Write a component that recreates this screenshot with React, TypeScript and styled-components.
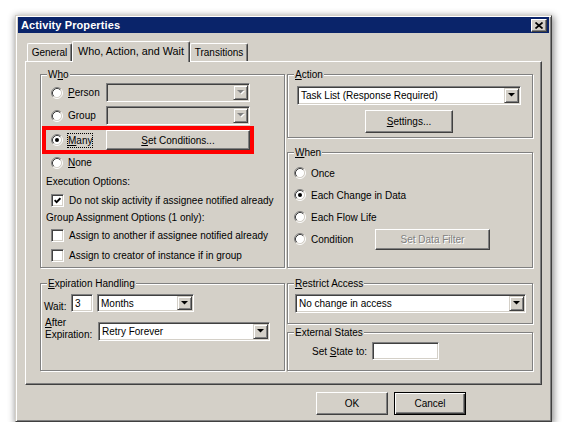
import React from 'react';
import styled, { createGlobalStyle, css } from 'styled-components';

const FACE = '#d4d0c8';
const SHADOW = '#808080';
const DARK = '#404040';
const LIGHT = '#ffffff';
const UI_FONT = '"Liberation Sans", Arial, sans-serif';

const GlobalStyle = createGlobalStyle`
  html, body {
    margin: 0;
    background: #ffffff;
  }
  body {
    font-family: ${UI_FONT};
    font-size: 10px;
    color: #000;
  }
`;

const raised = css`
  border: 1px solid;
  border-color: ${LIGHT} ${DARK} ${DARK} ${LIGHT};
  box-shadow: inset -1px -1px ${SHADOW};
`;

const sunken = css`
  border: 1px solid;
  border-color: ${SHADOW} ${LIGHT} ${LIGHT} ${SHADOW};
  box-shadow: inset 1px 1px ${DARK}, inset -1px -1px ${FACE};
`;

const Desktop = styled.div`
  padding: 15px 0 0 15px;
`;

const Window = styled.div`
  box-sizing: border-box;
  width: 537px;
  height: 407px;
  padding: 1px 2px 2px 2px;
  display: flex;
  flex-direction: column;
  background: ${FACE};
  border: 1px solid;
  border-color: ${FACE} ${DARK} ${DARK} ${FACE};
  box-shadow: inset 1px 1px ${LIGHT}, inset -1px -1px ${SHADOW}, 1px 2px 7px 1px rgba(0, 0, 0, 0.45);
`;

const TitleBar = styled.div`
  height: 16px;
  display: flex;
  align-items: center;
  justify-content: space-between;
  padding: 0 2px 0 3px;
  background: #0a246a;
`;

const TitleText = styled.span`
  color: #fff;
  font-weight: bold;
  font-size: 11px;
  letter-spacing: 0.1px;
`;

const CloseButton = styled.button`
  box-sizing: border-box;
  width: 16px;
  height: 13px;
  padding: 0;
  display: flex;
  align-items: center;
  justify-content: center;
  background: ${FACE};
  ${raised};
`;

const TabStrip = styled.div`
  display: flex;
  align-items: flex-end;
  height: 20px;
  margin: 8px 0 0 9px;
`;

const Tab = styled.div<{ $w: number; $active?: boolean }>`
  box-sizing: border-box;
  width: ${(p) => p.$w}px;
  height: ${(p) => (p.$active ? 21 : 18)}px;
  margin-bottom: ${(p) => (p.$active ? -1 : 0)}px;
  padding-top: 3px;
  position: ${(p) => (p.$active ? 'relative' : 'static')};
  z-index: ${(p) => (p.$active ? 1 : 0)};
  text-align: center;
  white-space: nowrap;
  font-size: ${(p) => (p.$active ? 10.8 : 10)}px;
  background: ${FACE};
  border-top: 1px solid ${LIGHT};
  border-left: 1px solid ${LIGHT};
  border-right: 1px solid ${DARK};
  border-radius: 2px 2px 0 0;
  box-shadow: inset -1px 0 ${SHADOW};
`;

const Panel = styled.div`
  box-sizing: border-box;
  width: 517px;
  height: 324px;
  margin-left: 7px;
  padding: 12px 8px 0 14px;
  display: grid;
  grid-template-columns: 245px 246px;
  column-gap: 2px;
  align-content: start;
  border: 1px solid;
  border-color: ${LIGHT} ${DARK} ${DARK} ${LIGHT};
  box-shadow: inset -1px -1px ${SHADOW};
`;

const Column = styled.div`
  display: flex;
  flex-direction: column;
`;

const GroupBox = styled.div<{ $h: number; $mt?: number }>`
  position: relative;
  box-sizing: border-box;
  height: ${(p) => p.$h}px;
  margin-top: ${(p) => p.$mt ?? 0}px;
  border: 1px solid ${SHADOW};
  box-shadow: inset 1px 1px ${LIGHT}, 1px 1px ${LIGHT};
`;

const Legend = styled.span`
  position: absolute;
  top: -7px;
  left: 6px;
  padding: 0 1px;
  line-height: 13px;
  background: ${FACE};
`;

const GroupBody = styled.div<{ $pt: number; $pl: number }>`
  display: flex;
  flex-direction: column;
  padding: ${(p) => p.$pt}px 0 0 ${(p) => p.$pl}px;
`;

const ChoiceRow = styled.div<{ $h: number; $mt?: number; $col?: number; $pl?: number }>`
  display: grid;
  grid-template-columns: ${(p) => p.$col ?? 55}px auto;
  align-items: center;
  height: ${(p) => p.$h}px;
  margin-top: ${(p) => p.$mt ?? 0}px;
  padding-left: ${(p) => p.$pl ?? 9}px;
`;

// red frame drawn round the "Many" choice
const Highlight = styled.div`
  box-sizing: border-box;
  width: 212px;
  height: 28px;
  margin-top: 1px;
  padding-left: 5px;
  display: grid;
  grid-template-columns: 55px 144px;
  align-items: center;
  border: 4px solid #ff0000;
`;

const OptionRow = styled.div<{ $h: number; $mt?: number; $pl?: number }>`
  display: flex;
  align-items: center;
  height: ${(p) => p.$h}px;
  margin-top: ${(p) => p.$mt ?? 0}px;
  padding-left: ${(p) => p.$pl ?? 9}px;
  white-space: nowrap;
`;

const Choice = styled.label`
  display: flex;
  align-items: center;
  white-space: nowrap;
`;

const ChoiceText = styled.span<{ $focused?: boolean }>`
  margin-left: ${(p) => (p.$focused ? 4 : 5)}px;
  ${(p) =>
    p.$focused &&
    css`
      border: 1px dotted #000;
      padding: 1px 0;
      line-height: 11px;
    `}
`;

const CheckBox = styled.span`
  box-sizing: border-box;
  width: 13px;
  height: 13px;
  display: flex;
  align-items: center;
  justify-content: center;
  background: #fff;
  ${sunken};
`;

const ComboBox = styled.div<{ $w: number; $h?: number; $disabled?: boolean }>`
  box-sizing: border-box;
  width: ${(p) => p.$w}px;
  height: ${(p) => p.$h ?? 19}px;
  padding: 1px;
  display: flex;
  align-items: stretch;
  background: ${(p) => (p.$disabled ? FACE : '#fff')};
  ${sunken};
`;

const ComboText = styled.span`
  flex: 1;
  display: flex;
  align-items: center;
  padding-left: 2px;
  white-space: nowrap;
  overflow: hidden;
`;

const DropButton = styled.span`
  box-sizing: border-box;
  width: 15px;
  display: flex;
  align-items: center;
  justify-content: center;
  background: ${FACE};
  border: 1px solid;
  border-color: ${FACE} ${DARK} ${DARK} ${FACE};
  box-shadow: inset 1px 1px ${LIGHT}, inset -1px -1px ${SHADOW};
`;

const TextBox = styled.div<{ $w: number; $h?: number }>`
  box-sizing: border-box;
  width: ${(p) => p.$w}px;
  height: ${(p) => p.$h ?? 18}px;
  padding: 1px 3px;
  display: flex;
  align-items: center;
  background: #fff;
  ${sunken};
`;

const PushButton = styled.button<{ $w: number; $h: number; $default?: boolean }>`
  box-sizing: border-box;
  width: ${(p) => p.$w}px;
  height: ${(p) => p.$h}px;
  padding: 0;
  font-family: ${UI_FONT};
  font-size: 10px;
  color: ${(p) => (p.disabled ? SHADOW : '#000')};
  text-shadow: ${(p) => (p.disabled ? `1px 1px ${LIGHT}` : 'none')};
  background: ${FACE};
  ${(p) =>
    p.$default
      ? css`
          border: 1px solid #000;
          box-shadow: inset 1px 1px ${LIGHT}, inset -1px -1px ${DARK}, inset -2px -2px ${SHADOW};
        `
      : raised};
`;

const CenterBox = styled.div`
  width: 224px;
  display: flex;
  justify-content: center;
  margin-top: 5px;
`;

const Caption = styled.span<{ $w: number }>`
  width: ${(p) => p.$w}px;
  flex-shrink: 0;
  white-space: nowrap;
`;

const StackCaption = styled.span`
  width: 53px;
  flex-shrink: 0;
  line-height: 12px;
  padding-left: 1px;
`;

const ExpireRow = styled.div<{ $mt?: number }>`
  display: flex;
  align-items: flex-end;
  margin-top: ${(p) => p.$mt ?? 0}px;
`;

const Spacer = styled.span<{ $w: number }>`
  width: ${(p) => p.$w}px;
  flex-shrink: 0;
`;

const ButtonBar = styled.div`
  display: flex;
  gap: 6px;
  margin-top: 7px;
  padding-left: 298px;
`;

const RadioMark = ({ checked }: { checked?: boolean }) => (
  <svg width="12" height="12" viewBox="0 0 12 12">
    <circle cx="6" cy="6" r="4.5" fill="#fff" />
    <path d="M2.11 9.89A5.5 5.5 0 0 1 9.89 2.11" fill="none" stroke={SHADOW} />
    <path d="M9.89 2.11A5.5 5.5 0 0 1 2.11 9.89" fill="none" stroke={LIGHT} />
    <path d="M2.82 9.18A4.5 4.5 0 0 1 9.18 2.82" fill="none" stroke={DARK} />
    <path d="M9.18 2.82A4.5 4.5 0 0 1 2.82 9.18" fill="none" stroke={FACE} />
    {checked && <circle cx="6" cy="6" r="2" fill="#000" />}
  </svg>
);

const CheckMark = () => (
  <svg width="7" height="7" viewBox="0 0 7 7">
    <path d="M0.6 3.2L2.6 5.2L6.4 1.2" fill="none" stroke="#000" strokeWidth="1.8" />
  </svg>
);

const Arrow = ({ disabled }: { disabled?: boolean }) => (
  <svg width="8" height="5" viewBox="0 0 8 5">
    {disabled && <path d="M1 1H8L4.5 4.5Z" fill={LIGHT} />}
    <path d="M0 0H7L3.5 3.5Z" fill={disabled ? SHADOW : '#000'} />
  </svg>
);

const CloseGlyph = () => (
  <svg width="8" height="7" viewBox="0 0 8 7">
    <path d="M0.5 0.5L7.5 6.5M7.5 0.5L0.5 6.5" stroke="#000" strokeWidth="1.7" />
  </svg>
);

const Combo = ({ w, h, text, disabled }: { w: number; h?: number; text?: string; disabled?: boolean }) => (
  <ComboBox $w={w} $h={h} $disabled={disabled}>
    <ComboText>{text}</ComboText>
    <DropButton>
      <Arrow disabled={disabled} />
    </DropButton>
  </ComboBox>
);

const Radio = ({ checked, children, focused }: { checked?: boolean; focused?: boolean; children: React.ReactNode }) => (
  <Choice>
    <RadioMark checked={checked} />
    <ChoiceText $focused={focused}>{children}</ChoiceText>
  </Choice>
);

const Check = ({ checked, children }: { checked?: boolean; children: React.ReactNode }) => (
  <Choice>
    <CheckBox>{checked && <CheckMark />}</CheckBox>
    <ChoiceText>{children}</ChoiceText>
  </Choice>
);

const App: React.FC = () => {
  return (
    <>
      <GlobalStyle />
      <Desktop>
        <Window>
          <TitleBar>
            <TitleText>Activity Properties</TitleText>
            <CloseButton>
              <CloseGlyph />
            </CloseButton>
          </TitleBar>

          <TabStrip>
            <Tab $w={45}>General</Tab>
            <Tab $w={118} $active>
              Who, Action, and Wait
            </Tab>
            <Tab $w={58}>Transitions</Tab>
          </TabStrip>

          <Panel>
            <Column>
              <GroupBox $h={194}>
                <Legend>
                  W<u>h</u>o
                </Legend>
                <GroupBody $pt={8} $pl={1}>
                  <ChoiceRow $h={19}>
                    <Radio>
                      <u>P</u>erson
                    </Radio>
                    <Combo w={144} disabled />
                  </ChoiceRow>
                  <ChoiceRow $h={19} $mt={4}>
                    <Radio>Group</Radio>
                    <Combo w={144} disabled />
                  </ChoiceRow>
                  <Highlight>
                    <Radio checked focused>
                      <u>M</u>any
                    </Radio>
                    <PushButton $w={144} $h={20}>
                      <u>S</u>et Conditions...
                    </PushButton>
                  </Highlight>
                  <OptionRow $h={17}>
                    <Radio>
                      <u>N</u>one
                    </Radio>
                  </OptionRow>
                  <OptionRow $h={21} $pl={4}>
                    Execution Options:
                  </OptionRow>
                  <OptionRow $h={17}>
                    <Check checked>Do not skip activity if assignee notified already</Check>
                  </OptionRow>
                  <OptionRow $h={17} $pl={4}>
                    Group Assignment Options (1 only):
                  </OptionRow>
                  <OptionRow $h={18}>
                    <Check>Assign to another if assignee notified already</Check>
                  </OptionRow>
                  <OptionRow $h={18} $mt={2}>
                    <Check>Assign to creator of instance if in group</Check>
                  </OptionRow>
                </GroupBody>
              </GroupBox>

              <GroupBox $h={88} $mt={15}>
                <Legend>
                  <u>E</u>xpiration Handling
                </Legend>
                <GroupBody $pt={10} $pl={3}>
                  <ExpireRow>
                    <Caption $w={27}>Wait:</Caption>
                    <TextBox $w={22}>3</TextBox>
                    <Spacer $w={4} />
                    <Combo w={97} h={18} text="Months" />
                  </ExpireRow>
                  <ExpireRow $mt={5}>
                    <StackCaption>
                      <u>A</u>fter
                      <br />
                      Expiration:
                    </StackCaption>
                    <Combo w={172} text="Retry Forever" />
                  </ExpireRow>
                </GroupBody>
              </GroupBox>
            </Column>

            <Column>
              <GroupBox $h={64}>
                <Legend>
                  <u>A</u>ction
                </Legend>
                <GroupBody $pt={11} $pl={9}>
                  <Combo w={224} text="Task List (Response Required)" />
                  <CenterBox>
                    <PushButton $w={88} $h={23}>
                      <u>S</u>ettings...
                    </PushButton>
                  </CenterBox>
                </GroupBody>
              </GroupBox>

              <GroupBox $h={116} $mt={14}>
                <Legend>
                  <u>W</u>hen
                </Legend>
                <GroupBody $pt={9} $pl={6}>
                  <OptionRow $h={22} $pl={0}>
                    <Radio>Once</Radio>
                  </OptionRow>
                  <OptionRow $h={22} $pl={0}>
                    <Radio checked>Each Change in Data</Radio>
                  </OptionRow>
                  <OptionRow $h={22} $pl={0}>
                    <Radio>Each Flow Life</Radio>
                  </OptionRow>
                  <ChoiceRow $h={22} $col={81} $pl={0}>
                    <Radio>Condition</Radio>
                    <PushButton $w={115} $h={21} disabled>
                      Set Data Filter
                    </PushButton>
                  </ChoiceRow>
                </GroupBody>
              </GroupBox>

              <GroupBox $h={41} $mt={15}>
                <Legend>
                  <u>R</u>estrict Access
                </Legend>
                <GroupBody $pt={10} $pl={7}>
                  <Combo w={231} text="No change in access" />
                </GroupBody>
              </GroupBox>

              <GroupBox $h={39} $mt={8}>
                <Legend>External States</Legend>
                <GroupBody $pt={9} $pl={24}>
                  <OptionRow $h={18} $pl={0}>
                    <Caption $w={60}>
                      Set <u>S</u>tate to:
                    </Caption>
                    <TextBox $w={67} />
                  </OptionRow>
                </GroupBody>
              </GroupBox>
            </Column>
          </Panel>

          <ButtonBar>
            <PushButton $w={72} $h={23}>
              OK
            </PushButton>
            <PushButton $w={72} $h={23} $default>
              Cancel
            </PushButton>
          </ButtonBar>
        </Window>
      </Desktop>
    </>
  );
};

export default App;
